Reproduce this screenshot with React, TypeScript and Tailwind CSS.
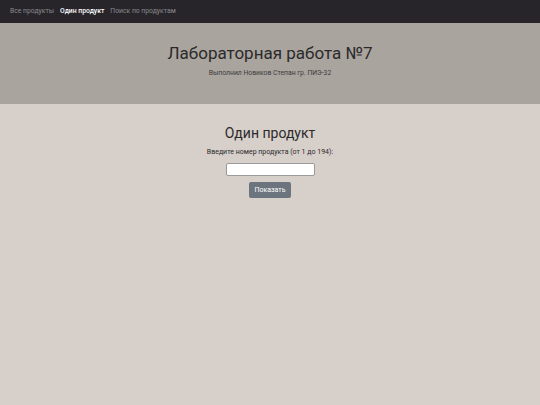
const links = [
  { label: "Все продукты", active: false },
  { label: "Один продукт", active: true },
  { label: "Поиск по продуктам", active: false },
];

export default function App() {
  return (
    <div
      className="min-h-[405px] w-full bg-[#d6cfca] text-[#212529]"
      style={{ fontFamily: "Roboto, 'Liberation Sans', sans-serif" }}
    >
      {/* Navbar */}
      <nav className="flex h-[23px] items-center gap-[6px] bg-[#27252a] px-[10px]">
        {links.map((link) => (
          <a
            key={link.label}
            href="#"
            className={
              link.active
                ? "text-[6.8px] font-medium text-white"
                : "text-[6.8px] text-[#8b898d]"
            }
          >
            {link.label}
          </a>
        ))}
      </nav>

      {/* Header */}
      <header className="flex h-[81px] flex-col items-center justify-center bg-[#aaa49f] pb-[6px]">
        <h1 className="text-[17px] leading-tight text-[#2b2a2a]">Лабораторная работа №7</h1>
        <p className="mt-[4px] text-[6.8px] text-[#3a3a3a]">Выполнил Новиков Степан гр. ПИЭ-32</p>
      </header>

      {/* Content */}
      <main className="flex flex-col items-center pt-[21px]">
        <h2 className="text-[14px] leading-tight text-[#2b2a2a]">Один продукт</h2>
        <p className="mt-[4px] text-[7px] text-[#2b2a2a]">Введите номер продукта (от 1 до 194):</p>
        <input
          type="text"
          className="mt-[6px] h-[13px] w-[89px] rounded-[2px] border border-[#9a9a9a] bg-white outline-none"
        />
        <button className="mt-[6px] h-[16px] rounded-[2px] bg-[#6c757d] px-[5px] text-[7px] text-white">
          Показать
        </button>
      </main>
    </div>
  );
}
